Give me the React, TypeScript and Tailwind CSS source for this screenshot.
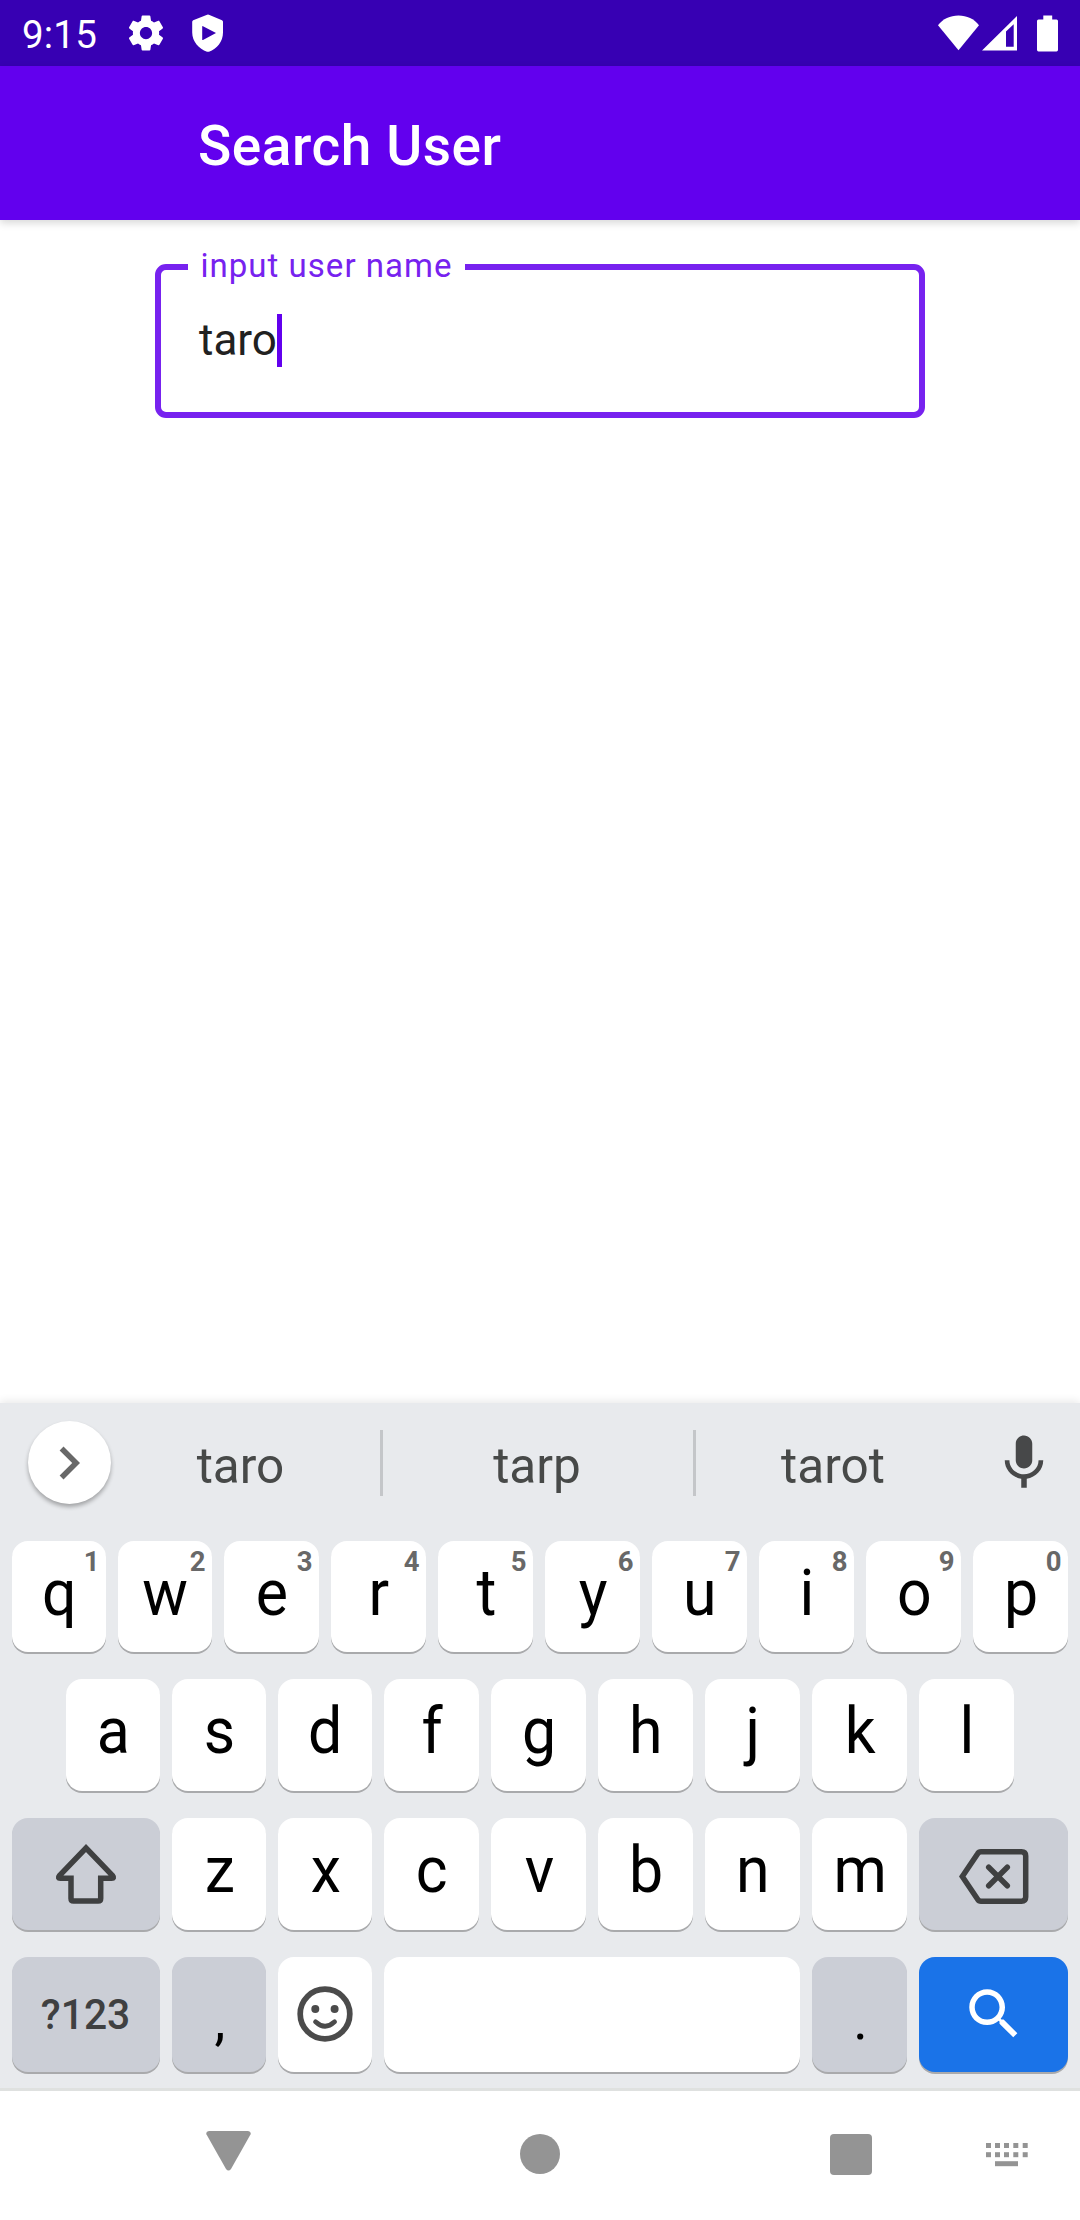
import React from "react";

const rowOne = ["q", "w", "e", "r", "t", "y", "u", "i", "o", "p"];
const rowTwo = ["a", "s", "d", "f", "g", "h", "j", "k", "l"];
const rowThree = ["z", "x", "c", "v", "b", "n", "m"];

const keyBase = "relative flex shrink-0 justify-center rounded-[16px] shadow-[0_2px_0_#a9aaac]";

function LetterKey({ letter, hint, narrow }: { letter: string; hint?: string; narrow: boolean }) {
  return (
    <div className={`${keyBase} ${narrow ? "w-[94px]" : "w-[95px]"} bg-white pt-[21px] pl-px text-[64px] leading-[64px] text-black`}>
      <span className="block h-[64px] scale-x-[0.95]">{letter}</span>
      {hint && (
        <span className="absolute top-[7px] right-[6.5px] text-[27.5px] leading-[27.5px] font-bold text-[#686868]">{hint}</span>
      )}
    </div>
  );
}

function StatusBar() {
  return (
    <header className="flex h-[66px] items-center bg-[#3700b3] text-white">
      <span className="ml-[22px] w-[76px] pt-[4px] text-[38.5px] leading-[44px] tracking-[0.2px]">9:15</span>
      <svg className="ml-[27px] h-[42px] w-[42px]" viewBox="0 0 24 24" fill="currentColor">
        <path d="M19.43 12.98c.04-.32.07-.64.07-.98s-.03-.66-.07-.98l2.11-1.65c.19-.15.24-.42.12-.64l-2-3.46c-.12-.22-.39-.3-.61-.22l-2.49 1c-.52-.4-1.08-.73-1.69-.98l-.38-2.65C14.46 2.18 14.25 2 14 2h-4c-.25 0-.46.18-.49.42l-.38 2.65c-.61.25-1.17.59-1.69.98l-2.49-1c-.23-.09-.49 0-.61.22l-2 3.46c-.13.22-.07.49.12.64l2.11 1.65c-.04.32-.07.65-.07.98s.03.66.07.98l-2.11 1.65c-.19.15-.24.42-.12.64l2 3.46c.12.22.39.3.61.22l2.49-1c.52.4 1.08.73 1.69.98l.38 2.65c.03.24.24.42.49.42h4c.25 0 .46-.18.49-.42l.38-2.65c.61-.25 1.17-.59 1.69-.98l2.49 1c.23.09.49 0 .61-.22l2-3.46c.12-.22.07-.49-.12-.64l-2.11-1.65zM12 15.5c-1.93 0-3.5-1.57-3.5-3.5s1.57-3.5 3.5-3.5 3.5 1.57 3.5 3.5-1.57 3.5-3.5 3.5z" />
      </svg>
      <svg className="ml-[25px] h-[38px] w-[32px]" viewBox="0 0 32 38" fill="currentColor">
        <path fillRule="evenodd" d="M14.500 1Q16 .2 17.500 1L30 6.200Q31 6.700 31 7.800V18.500C31 27.500 25 35 17 37.700Q16 38 15 37.700C7 35 .2 27.500.2 18.500V7.800Q.2 6.700 1.200 6.200zM10.200 12.500Q10.200 11.800 11 12.200L24 19 11 26Q10.200 26.300 10.200 25.500z" />
      </svg>
      <svg className="ml-auto h-[36px] w-[41px]" viewBox="0 0 41 36" fill="currentColor">
        <path d="M20.500 35.300 0 10.300C5 4 12 .6 20.500.6S36 4 41 10.300z" />
      </svg>
      <svg className="ml-[3px] h-[36px] w-[35px]" viewBox="0 0 35 36" fill="currentColor">
        <path fillRule="evenodd" d="M35 1v34.500H0zM31.700 9.300 24 16.500v15.200h7.700z" />
      </svg>
      <svg className="mr-[22px] ml-[20px] h-[37px] w-[21px]" viewBox="0 0 21 37" fill="currentColor">
        <path d="M6.300.5h8.900v4h4.300Q21 4.500 21 6v28.800q0 1.700-1.500 1.700h-18Q0 36.500 0 34.800V6q0-1.500 1.500-1.500h4.800z" />
      </svg>
    </header>
  );
}

function SuggestionStrip() {
  const word = "flex justify-center pt-[6px] text-[49.5px] leading-[60px] text-[#474948]";
  return (
    <div className="flex h-[138px] items-start">
      <div className="mt-[18px] ml-[28px] flex h-[83px] w-[83px] shrink-0 items-center justify-center rounded-full bg-white pr-[1.5px] shadow-[0_3px_4px_rgba(0,0,0,0.3)]">
        <svg className="h-[66px] w-[66px]" viewBox="0 0 24 24" fill="#686868">
          <path d="M10 6 8.590 7.410 13.170 12l-4.580 4.590L10 18l6-6z" />
        </svg>
      </div>
      <div className="mt-[27px] flex h-[66px]">
        <div className={`${word} ml-[-10px] w-[279px]`}>taro</div>
        <div className="w-[3px] bg-[#c4c6c9]" />
        <div className={`${word} w-[310px] pr-[2px]`}>tarp</div>
        <div className="w-[3px] bg-[#c4c6c9]" />
        <div className={`${word} w-[274px]`}>tarot</div>
      </div>
      <svg className="mt-[27px] ml-[21px] h-[66px] w-[66px] shrink-0" viewBox="0 0 24 24" fill="#474849">
        <path d="M12 14c1.660 0 3-1.340 3-3V5c0-1.660-1.340-3-3-3S9 3.340 9 5v6c0 1.660 1.340 3 3 3zm5.300-3c0 3-2.540 5.100-5.300 5.100S6.700 14 6.700 11H5c0 3.410 2.720 6.230 6 6.720V21h2v-3.280c3.280-.48 6-3.300 6-6.720z" />
      </svg>
    </div>
  );
}

function Keyboard() {
  return (
    <section className="flex h-[688px] flex-col border-b-[3px] border-[#dfe1e0] bg-[#e8eaed] shadow-[0_-2px_8px_rgba(0,0,0,0.09)]">
      <SuggestionStrip />
      <div className="flex h-[111px] gap-3 pl-3">
        {rowOne.map((k, i) => (
          <LetterKey key={k} letter={k} hint={String((i + 1) % 10)} narrow={i < 2} />
        ))}
      </div>
      <div className="mt-[27px] flex h-[112px] gap-3 pl-[66px]">
        {rowTwo.map((k, i) => (
          <LetterKey key={k} letter={k} narrow={i < 3} />
        ))}
      </div>
      <div className="mt-[27px] flex h-[112px] gap-3 pl-3">
        <div className={`${keyBase} w-[148px] items-center bg-[#cbced6]`}>
          <svg className="h-[62px] w-[62px]" viewBox="0 0 62 62" fill="none" stroke="#3f4041" strokeWidth="5.5">
            <path d="M31 5 57.500 32.500Q59.800 35.300 56.500 35.300H45.700V55.500Q45.700 58 43.200 58H18.500Q16 58 16 55.500V35.300H5.500Q2.200 35.300 4.500 32.500z" />
          </svg>
        </div>
        {rowThree.map((k, i) => (
          <LetterKey key={k} letter={k} narrow={i < 2} />
        ))}
        <div className={`${keyBase} w-[149px] bg-[#cbced6] pt-[31px]`}>
          <svg className="h-[55px] w-[70px]" viewBox="0 0 70 55" fill="none" stroke="#3f4041" strokeWidth="5.5">
            <path d="M22 2.750H62.500Q66.700 2.750 66.700 7V48Q66.700 52.200 62.500 52.200H22Q19.800 52.200 18.600 50.300L3.300 27.500 18.600 4.700Q19.800 2.750 22 2.750z" />
            <path strokeLinecap="round" d="m29.700 18.200 18.600 18.600m0-18.600L29.700 36.800" />
          </svg>
        </div>
      </div>
      <div className="mt-[27px] flex h-[115px] gap-3 pl-3">
        <div className={`${keyBase} w-[148px] bg-[#cbced6] pt-[34px] pr-px text-[42.500px] leading-[48px] font-medium text-[#3f4041]`}>
          <span className="block h-[48px] scale-x-[0.96]">?123</span>
        </div>
        <div className={`${keyBase} w-[94px] bg-[#cbced6] pt-[36px] pl-[2px] text-[55px] leading-[55px] text-black`}>,</div>
        <div className={`${keyBase} w-[94px] bg-white pt-[28.5px]`}>
          <svg className="h-[56px] w-[56px]" viewBox="0 0 56 56" fill="none" stroke="#4b4b4b">
            <circle cx="28" cy="28" r="24.800" strokeWidth="5.700" />
            <circle cx="18.300" cy="23" r="4" fill="#4b4b4b" stroke="none" />
            <circle cx="37.600" cy="23" r="4" fill="#4b4b4b" stroke="none" />
            <path d="M18.500 35.800Q28 44.700 37.600 35.800" strokeWidth="4.700" strokeLinecap="round" />
          </svg>
        </div>
        <div className={`${keyBase} w-[416px] bg-white`} />
        <div className={`${keyBase} w-[95px] bg-[#cbced6] pt-[36px] pl-[2px] text-[55px] leading-[55px] text-black`}>.</div>
        <div className={`${keyBase} w-[149px] bg-[#1a73e8] pt-[24px]`}>
          <svg className="h-[66px] w-[66px]" viewBox="0 0 24 24" fill="white">
            <path d="M15.500 14h-.79l-.28-.27C15.410 12.590 16 11.110 16 9.500 16 5.910 13.090 3 9.500 3S3 5.910 3 9.500 5.910 16 9.500 16c1.610 0 3.090-.59 4.230-1.570l.27.28v.79l5 4.990L20.490 19l-4.990-5zm-6 0C7.010 14 5 11.990 5 9.500S7.010 5 9.500 5 14 7.010 14 9.500 11.990 14 9.500 14z" />
          </svg>
        </div>
      </div>
    </section>
  );
}

function NavigationBar() {
  return (
    <nav className="flex h-[129px] items-start bg-white text-[#949494]">
      <svg className="mt-[40px] ml-[206px] h-[40px] w-[45px]" viewBox="0 0 45 40" fill="currentColor">
        <path d="M3 0H42Q45.500.3 44.500 3.500L25 38Q22.500 41 20 38L.5 3.500Q-.5.3 3 0z" />
      </svg>
      <div className="mt-[43px] ml-[269px] h-[40px] w-[40px] rounded-full bg-[#949494]" />
      <div className="mt-[43px] ml-[270px] h-[41px] w-[42px] rounded-[4px] bg-[#949494]" />
      <svg className="mt-[52px] ml-[114px] h-[24px] w-[42px]" viewBox="0 0 42 24" fill="currentColor">
        {[0, 9, 18, 27.300, 36.700].map((x) => (
          <g key={x}>
            <rect x={x} y="0" width="5" height="5" />
            <rect x={x} y="9.200" width="5" height="5" />
          </g>
        ))}
        <rect x="9" y="18.200" width="23" height="5" />
      </svg>
    </nav>
  );
}

export default function App() {
  return (
    <div className="flex h-[2220px] w-[1080px] flex-col overflow-hidden bg-white font-['Roboto',sans-serif]">
      <StatusBar />
      <div className="flex h-[154px] items-center bg-[#6200ee] pt-[5px] pl-[198px] shadow-[0_3px_8px_rgba(0,0,0,0.16)]">
        <h1 className="text-[55px] leading-[64px] font-medium tracking-[0.550px] text-white">Search User</h1>
      </div>
      <main className="flex-1 px-[155px] pt-[44px]">
        <div className="relative h-[154px] rounded-[11px] border-[6px] border-[#7722ef] pt-[39px] pl-[38px]">
          <span className="absolute top-[-24px] left-[27px] flex h-[40px] w-[277px] justify-center bg-white text-[33px] leading-[40px] tracking-[1.030px] text-[#7722ef]">
            input user name
          </span>
          <div className="flex items-start">
            <span className="pt-[5px] text-[44px] leading-[52px] text-[#212121]">taro</span>
            <span className="mt-[5px] h-[53px] w-[5.500px] bg-[#6200ee]" />
          </div>
        </div>
      </main>
      <Keyboard />
      <NavigationBar />
    </div>
  );
}
